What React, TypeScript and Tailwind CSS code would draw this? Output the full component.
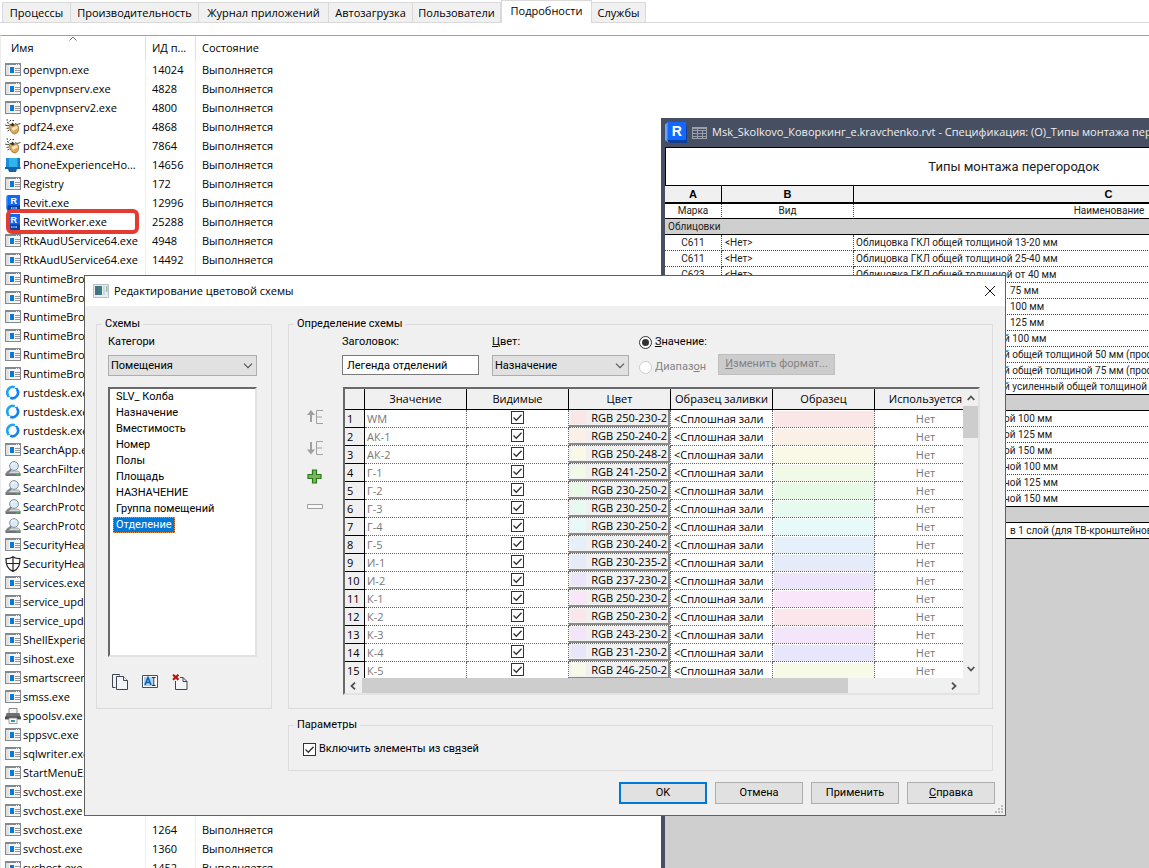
import { ReactNode } from "react";

type IconKind = "app" | "pdf" | "phone" | "revit" | "rustdesk" | "search" | "shield" | "printer";

type Process = { name: string; pid: string; icon?: IconKind; marked?: boolean };

const processes: Process[] = [
  { name: "openvpn.exe", pid: "14024" },
  { name: "openvpnserv.exe", pid: "4828" },
  { name: "openvpnserv2.exe", pid: "4800" },
  { name: "pdf24.exe", pid: "4868", icon: "pdf" },
  { name: "pdf24.exe", pid: "7864", icon: "pdf" },
  { name: "PhoneExperienceHo...", pid: "14656", icon: "phone" },
  { name: "Registry", pid: "172" },
  { name: "Revit.exe", pid: "12996", icon: "revit" },
  { name: "RevitWorker.exe", pid: "25288", icon: "revit", marked: true },
  { name: "RtkAudUService64.exe", pid: "4948" },
  { name: "RtkAudUService64.exe", pid: "14492" },
  { name: "RuntimeBroker.exe", pid: "12084" },
  { name: "RuntimeBroker.exe", pid: "" },
  { name: "RuntimeBroker.exe", pid: "" },
  { name: "RuntimeBroker.exe", pid: "" },
  { name: "RuntimeBroker.exe", pid: "" },
  { name: "RuntimeBroker.exe", pid: "" },
  { name: "rustdesk.exe", pid: "", icon: "rustdesk" },
  { name: "rustdesk.exe", pid: "", icon: "rustdesk" },
  { name: "rustdesk.exe", pid: "", icon: "rustdesk" },
  { name: "SearchApp.exe", pid: "" },
  { name: "SearchFilterHost.exe", pid: "", icon: "search" },
  { name: "SearchIndexer.exe", pid: "", icon: "search" },
  { name: "SearchProtocolHo...", pid: "", icon: "search" },
  { name: "SearchProtocolHo...", pid: "", icon: "search" },
  { name: "SecurityHealthSer...", pid: "" },
  { name: "SecurityHealthSyst...", pid: "", icon: "shield" },
  { name: "services.exe", pid: "" },
  { name: "service_update.exe", pid: "" },
  { name: "service_update.exe", pid: "" },
  { name: "ShellExperienceHo...", pid: "" },
  { name: "sihost.exe", pid: "" },
  { name: "smartscreen.exe", pid: "" },
  { name: "smss.exe", pid: "" },
  { name: "spoolsv.exe", pid: "", icon: "printer" },
  { name: "sppsvc.exe", pid: "" },
  { name: "sqlwriter.exe", pid: "" },
  { name: "StartMenuExperien...", pid: "" },
  { name: "svchost.exe", pid: "" },
  { name: "svchost.exe", pid: "" },
  { name: "svchost.exe", pid: "1264" },
  { name: "svchost.exe", pid: "1360" },
  { name: "svchost.exe", pid: "1452" },
];

const tabs = [
  { title: "Процессы", width: "w-[69px]" },
  { title: "Производительность", width: "w-[128px]" },
  { title: "Журнал приложений", width: "w-[130px]" },
  { title: "Автозагрузка", width: "w-[84px]" },
  { title: "Пользователи", width: "w-[88px]" },
  { title: "Подробности", width: "w-[91px]", active: true },
  { title: "Службы", width: "w-[54px]" },
];

type ScheduleRow = { mark: string; name?: string; rest?: string; group?: boolean; wide?: boolean };

const partition = "Перегородка общей толщино";

const scheduleRows: ScheduleRow[] = [
  { mark: "Облицовки", group: true },
  { mark: "С611", name: "Облицовка ГКЛ общей толщиной 13-20 мм" },
  { mark: "С611", name: "Облицовка ГКЛ общей толщиной 25-40 мм" },
  { mark: "С623", name: "Облицовка ГКЛ общей толщиной от 40 мм" },
  { mark: "С625", name: "Облицовка ГКЛ толщиной", rest: "75 мм", wide: true },
  { mark: "С625", name: "Облицовка ГКЛ толщиной", rest: "100 мм", wide: true },
  { mark: "С626", name: "Облицовка ГКЛ толщиной", rest: "125 мм", wide: true },
  { mark: "С626", name: partition, rest: "й 100 мм" },
  { mark: "С111", name: partition, rest: "й общей толщиной 50 мм (профиль)" },
  { mark: "С111", name: partition, rest: "й общей толщиной 75 мм (профиль)" },
  { mark: "С111", name: partition, rest: "й усиленный общей толщиной 100 мм" },
  { mark: "Перегородки", group: true },
  { mark: "С111", name: partition, rest: "ой 100 мм" },
  { mark: "С111", name: partition, rest: "ой 125 мм" },
  { mark: "С111", name: partition, rest: "ой 150 мм" },
  { mark: "С112", name: partition, rest: "ной 100 мм" },
  { mark: "С112", name: partition, rest: "ной 125 мм" },
  { mark: "С112", name: partition, rest: "ной 150 мм" },
  { mark: "Усиление", group: true },
  { mark: "У1", name: "Усиление фанерой", rest: "в 1 слой (для ТВ-кронштейнов)", wide: true },
];

const schemes = [
  "SLV_ Колба",
  "Назначение",
  "Вместимость",
  "Номер",
  "Полы",
  "Площадь",
  "НАЗНАЧЕНИЕ",
  "Группа помещений",
  "Отделение",
];

const entries = [
  { value: "WM", rgb: "RGB 250-230-2", color: "bg-[#fae6e6]" },
  { value: "АК-1", rgb: "RGB 250-240-2", color: "bg-[#faf0e6]" },
  { value: "АК-2", rgb: "RGB 250-248-2", color: "bg-[#faf8e6]" },
  { value: "Г-1", rgb: "RGB 241-250-2", color: "bg-[#f1fae6]" },
  { value: "Г-2", rgb: "RGB 230-250-2", color: "bg-[#e6fae6]" },
  { value: "Г-3", rgb: "RGB 230-250-2", color: "bg-[#e6faf0]" },
  { value: "Г-4", rgb: "RGB 230-250-2", color: "bg-[#e6fafa]" },
  { value: "Г-5", rgb: "RGB 230-240-2", color: "bg-[#e6f0fa]" },
  { value: "И-1", rgb: "RGB 230-235-2", color: "bg-[#e6ebfa]" },
  { value: "И-2", rgb: "RGB 237-230-2", color: "bg-[#ede6fa]" },
  { value: "К-1", rgb: "RGB 250-230-2", color: "bg-[#fae6fa]" },
  { value: "К-2", rgb: "RGB 250-230-2", color: "bg-[#fae6eb]" },
  { value: "К-3", rgb: "RGB 243-230-2", color: "bg-[#f3e6fa]" },
  { value: "К-4", rgb: "RGB 231-230-2", color: "bg-[#e7e6fa]" },
  { value: "К-5", rgb: "RGB 246-250-2", color: "bg-[#f6fae6]" },
];

const ProcessIcon = ({ kind = "app" }: { kind?: IconKind }) => {
  switch (kind) {
    case "pdf":
      return (
        <svg viewBox="0 0 16 16" className="size-4 shrink-0">
          <path d="M1.500 1h1.500M4.500 2.500L6 1M7.500 1.500h1.500M2 3.500l2 .8" stroke="#333" fill="none" />
          <path d="M0 6l3 .8 3-1.600M10 4.500l2 1 3.500-1M1.500 9.500l2.500-.5M2.500 12l2-1" stroke="#5a4c3c" fill="none" />
          <path d="M4.500 7c2-1.500 7-2 9 .5.800 3.500-.8 7-3.500 7.500C7 15 4.500 11.500 4.500 7z" fill="#d9a95c" stroke="#8b6227" strokeWidth=".7" />
          <path d="M6.500 9l5-2 1.500 2-5 3z" fill="#fbe6b6" />
          <path d="M5.500 6l2-2.500L9.500 6 8 7.500z" fill="#2e2e2e" />
        </svg>
      );
    case "phone":
      return (
        <svg viewBox="0 0 16 16" className="size-4 shrink-0">
          <path d="M1 1h12v10H1z" fill="#2fb4ee" />
          <path d="M1 1h3v9H1z" fill="#1c8fd8" />
          <path d="M12.500 1H15v11h-2.500z" fill="#1577c4" />
          <path d="M0 10h15.500v2H0z" fill="#0f62ad" />
          <path d="M3 12h9l-1 3H4z" fill="#1b5fa5" />
        </svg>
      );
    case "revit":
      return (
        <svg viewBox="0 0 16 16" className="size-4 shrink-0">
          <path d="M1 1.500L3 0v15l-2-1z" fill="#5b9cf3" />
          <path d="M2.500 0H15v16H2.500z" fill="#1268f3" />
          <path d="M2.500 10.500H15V16H2.500z" fill="#0a3fa4" />
          <text x="8.700" y="8.800" textAnchor="middle" fontSize="9" fontWeight="700" fill="#fff" fontFamily="Liberation Sans, sans-serif">R</text>
          <path d="M6 13h1.500M8.300 13h1.200M10.300 13H12" stroke="#b8cff8" strokeWidth="1.500" />
        </svg>
      );
    case "rustdesk":
      return (
        <svg viewBox="0 0 16 16" className="size-4 shrink-0" fill="none" strokeWidth="2.600">
          <path d="M9.800 2.200A5.600 5.600 0 0 0 3.400 10.800" stroke="#1fa3f5" />
          <path d="M5.200 12.800A5.600 5.600 0 0 0 11.800 4.200" stroke="#1483f0" />
          <path d="M1.500 9l1 3.500 3-1z" fill="#1fa3f5" />
          <path d="M13.500 6l-1-3.500-3 1z" fill="#1483f0" />
        </svg>
      );
    case "search":
      return (
        <svg viewBox="0 0 16 16" className="size-4 shrink-0">
          <path d="M2.500 10h11l2 3H.5z" fill="#d7d9db" stroke="#8a8d90" strokeWidth=".7" />
          <path d="M.5 12.500h15V15H.5z" fill="#6f7377" />
          <path d="M11.500 13.200h2v1.300h-2z" fill="#37d13f" />
          <path d="M6.500 8L2 12.500" stroke="#7d8288" strokeWidth="2" />
          <circle cx="9" cy="5" r="4.400" fill="#d9eaf8" stroke="#8d9297" />
          <path d="M6.500 4.500a2.600 2.600 0 0 1 3-2" stroke="#fff" fill="none" />
        </svg>
      );
    case "shield":
      return (
        <svg viewBox="0 0 16 16" className="size-4 shrink-0" fill="none" stroke="#222" strokeWidth="1.200">
          <path d="M8 .7C6 2.400 3.500 2.700 1 2.700c0 6 1 10 7 12.700 6-2.700 7-6.700 7-12.700C12.500 2.700 10 2.400 8 .7zM8 1v14M1.200 7.500h13.600" />
        </svg>
      );
    case "printer":
      return (
        <svg viewBox="0 0 16 16" className="size-4 shrink-0">
          <path d="M4 .5h8V6H4z" fill="#f2f2f2" stroke="#8c8c8c" />
          <path d="M1.500 5h13l1.500 6.500H0z" fill="#6d6f72" />
          <path d="M0 8.500h16V11H0z" fill="#4c4e50" />
          <path d="M4 10h8v5.500H4z" fill="#fafafa" stroke="#8c8c8c" strokeWidth=".8" />
          <path d="M6 12h2v2H6z" fill="#2b8ad6" />
          <path d="M8 12h2v2H8z" fill="#3da45a" />
        </svg>
      );
    default:
      return (
        <svg viewBox="0 0 16 16" className="size-4 shrink-0" shapeRendering="crispEdges">
          <path d="M0 1h16v13H0z" fill="#84898e" />
          <path d="M1 3h14v10H1z" fill="#f6f6f6" />
          <path d="M1 3h3v10H1z" fill="#e2e2e2" />
          <path d="M5 5h4v6H5z" fill="#0b78d7" />
          <path d="M10 6h5M10 8h5M10 10h5" stroke="#9a9a9a" transform="translate(0 .5)" />
          <path d="M11 2h1v1h-1zM13 2h1v1h-1z" fill="#e8eaec" />
        </svg>
      );
  }
};

const TaskManager = () => (
  <div className="min-w-[660px] font-['Open_Sans',sans-serif] text-[11px] leading-4 text-black">
    <div role="tablist" className="flex h-[23px] items-end border-b border-[#d9d9d9] pl-[2px]">
      {tabs.map((tab) => (
        <button
          key={tab.title}
          role="tab"
          aria-selected={!!tab.active}
          className={`${tab.width} shrink-0 whitespace-nowrap border-[#d9d9d9] text-center ${
            tab.active ? "-mb-px h-[23px] border-x border-t bg-white pb-[2px]" : "h-[20px] border-t border-r bg-[#f0f0f0] first:border-l"
          }`}
        >
          {tab.title}
        </button>
      ))}
    </div>
    <div className="mt-3 border-t border-l border-t-[#a0a0a0] border-l-[#ececec]">
      <table className="w-full table-fixed border-separate border-spacing-0 text-left">
        <colgroup>
          <col className="w-[145px]" />
          <col className="w-[50px]" />
          <col />
        </colgroup>
        <thead>
          <tr className="h-[24px]">
            <th className="relative border-r border-[#e0e0e0] pl-[10px] font-normal">
              Имя
              <svg viewBox="0 0 8 5" className="absolute top-0 left-[68px] h-[5px] w-2" fill="none" stroke="#777">
                <path d="M.5 4.500L4 1l3.500 3.500" />
              </svg>
            </th>
            <th className="border-r border-[#e0e0e0] pl-[6px] font-normal">ИД п...</th>
            <th className="pl-[6px] font-normal">Состояние</th>
          </tr>
        </thead>
        <tbody>
          {processes.map((process, i) => (
            <tr key={i} className="h-[19px]">
              <td className="relative border-r border-[#e9eff8] p-0 pl-1">
                <div className="flex items-center gap-[2px] overflow-hidden whitespace-nowrap">
                  <ProcessIcon kind={process.icon} />
                  {process.name}
                </div>
                {process.marked && (
                  <span className="absolute -top-[3px] left-[5px] h-[25px] w-[133px] rounded-[6px] border-4 border-[#e53a30]" />
                )}
              </td>
              <td className="border-r border-[#e9eff8] p-0 pl-[6px]">{process.pid}</td>
              <td className="p-0 pl-[6px]">Выполняется</td>
            </tr>
          ))}
        </tbody>
      </table>
    </div>
  </div>
);

const ScheduleWindow = () => (
  <div className="absolute top-[118px] right-0 bottom-0 left-[661px] overflow-hidden bg-[#474f62] pl-1">
    <div className="flex h-[29px] items-center font-['Open_Sans',sans-serif] text-[11px] text-[#f0f0f0]">
      <svg viewBox="0 0 22 22" className="size-[22px] shrink-0">
        <path d="M0 2.500L3 0v20l-3-2z" fill="#6ba4f5" />
        <path d="M2 18l3 3h17V5l-2-4z" fill="#0d3e9c" />
        <path d="M2.500 0H21v18H2.500z" fill="#1268ff" />
        <text x="11.800" y="14" textAnchor="middle" fontSize="14" fontWeight="700" fill="#fff" fontFamily="Liberation Sans, sans-serif">R</text>
      </svg>
      <svg viewBox="0 0 15 12" className="ml-[5px] h-3 w-[15px] shrink-0" fill="none" stroke="#9aa0ab" shapeRendering="crispEdges">
        <path d="M.5 .5h14v11H.5zM0 3.500h15M0 6.500h15M0 9h15M5.500 0v12M10.500 3v9" />
        <path d="M0 1.500h15" />
      </svg>
      <span className="ml-[5px] whitespace-nowrap">
        Msk_Skolkovo_Коворкинг_e.kravchenko.rvt - Спецификация: (О)_Типы монтажа перегородок
      </span>
    </div>
    <div className="h-full w-[890px] bg-[#cfcfcf] font-['Roboto',sans-serif] text-[10px] text-[#222]">
      <div className="flex h-[39px] items-center justify-center border border-black bg-white pr-[192px] text-[13px]">
        Типы монтажа перегородок
      </div>
      <table className="w-full table-fixed border-separate border-spacing-0">
        <colgroup>
          <col className="w-[57px]" />
          <col className="w-[132px]" />
          <col className="w-[510px]" />
          <col />
        </colgroup>
        <thead>
          <tr className="h-[18px] bg-[#f0f0f0] font-['Liberation_Sans',sans-serif] text-[11px] leading-[14px] text-black">
            <th className="border-r border-b-2 border-black p-0">A</th>
            <th className="border-r border-b-2 border-black p-0">B</th>
            <th className="border-r border-b-2 border-black p-0">C</th>
            <th className="border-b-2 border-black p-0">D</th>
          </tr>
          <tr className="h-[15px] bg-white leading-[14px]">
            <th className="border-r border-b border-r-[#444] border-b-black p-0 font-normal [border-right-style:dotted]">Марка</th>
            <th className="border-r border-b border-r-[#444] border-b-black p-0 font-normal [border-right-style:dotted]">Вид</th>
            <th className="border-b border-black p-0 font-normal">Наименование</th>
            <th className="border-b border-black p-0 font-normal">Толщина</th>
          </tr>
        </thead>
        <tbody>
          {scheduleRows.map((row, i) => {
            const last = i === scheduleRows.length - 1 || scheduleRows[i + 1].group;
            const line = last ? "border-b border-b-black" : "border-b border-b-[#444] [border-bottom-style:dotted]";
            return row.group ? (
              <tr key={i} className="h-4 leading-[14px]">
                <td colSpan={4} className="border-b border-black bg-[#cfcfcf] p-0 pl-[3px]">{row.mark}</td>
              </tr>
            ) : (
              <tr key={i} className="h-4 bg-white leading-[14px]">
                <td className={`border-r border-r-[#444] p-0 text-center [border-right-style:dotted] ${line}`}>{row.mark}</td>
                <td className={`border-r border-r-[#444] p-0 pl-[3px] [border-right-style:dotted] ${line}`}>&lt;Нет&gt;</td>
                <td className={`p-0 pl-[2px] ${line}`}>
                  <div className="flex whitespace-nowrap">
                    <span className={`shrink-0 ${row.wide ? "min-w-[154px]" : "min-w-[148px]"}`}>{row.name}</span>
                    {row.rest && <span>{row.rest}</span>}
                  </div>
                </td>
                <td className={`p-0 ${line}`} />
              </tr>
            );
          })}
        </tbody>
      </table>
    </div>
  </div>
);

const Check = ({ id, label }: { id?: string; label?: string }) => (
  <span className="relative inline-block size-[13px] shrink-0 align-top">
    <input id={id} aria-label={label} type="checkbox" defaultChecked className="block size-[13px] appearance-none border border-[#333] bg-white" />
    <svg viewBox="0 0 13 13" className="pointer-events-none absolute inset-0" fill="none" stroke="#333" strokeWidth="1.300">
      <path d="M2.500 6.500l2.800 2.800 5.200-5.600" />
    </svg>
  </span>
);

const Dropdown = ({ id, value, className }: { id: string; value: string; className: string }) => (
  <div className={`relative ${className}`}>
    <select id={id} className="h-[21px] w-full appearance-none border border-[#adadad] bg-[#e1e1e1] pl-[2px] leading-4">
      <option>{value}</option>
    </select>
    <svg viewBox="0 0 10 6" className="pointer-events-none absolute top-[8px] right-1 h-[6px] w-[10px]" fill="none" stroke="#555" strokeWidth="1.100">
      <path d="M1 .7l4 4 4-4" />
    </svg>
  </div>
);

type GroupProps = { title: string; className?: string; bodyClassName: string; children: ReactNode };

const Group = ({ title, className = "", bodyClassName, children }: GroupProps) => (
  <fieldset className={`min-w-0 border border-[#dcdcdc] ${className}`}>
    <legend className="ml-[5px] px-[3px] leading-[14px]">{title}</legend>
    <div className={bodyClassName}>{children}</div>
  </fieldset>
);

const SchemeList = () => (
  <Group title="Схемы" className="w-[176px] shrink-0 self-start" bodyClassName="pt-[3px] pr-[14px] pb-[18px] pl-[11px]">
    <label htmlFor="category" className="block leading-4">Категори</label>
    <Dropdown id="category" value="Помещения" className="mt-[5px]" />
    <ul
      role="listbox"
      aria-label="Схемы"
      className="mt-[11px] h-[270px] border-2 border-t-[#696969] border-r-[#e3e3e3] border-b-[#e3e3e3] border-l-[#696969] bg-white pl-[3px]"
    >
      {schemes.map((scheme, i) => (
        <li key={scheme} role="option" aria-selected={i === schemes.length - 1} className="flex h-4 items-center whitespace-nowrap leading-4">
          <span
            className={
              i === schemes.length - 1
                ? "border border-dotted border-[#e8924a] bg-[#0078d7] px-[2px] leading-[14px] text-white"
                : "px-[3px]"
            }
          >
            {scheme}
          </span>
        </li>
      ))}
    </ul>
    <div className="mt-[17px] flex gap-[14px] pl-1">
      <button aria-label="Копировать">
        <svg viewBox="0 0 16 16" className="size-4" fill="#f4f5f8" stroke="#3f4452">
          <path d="M.5 .5h7v1M.5 .5v13h3" fill="none" />
          <path d="M4.500 2.500h7l4 4v9h-11z" />
          <path d="M11.500 2.500v4h4" />
        </svg>
      </button>
      <button aria-label="Переименовать">
        <svg viewBox="0 0 16 16" className="size-4">
          <path d="M.5 1.500h15v12H.5z" fill="#fff" stroke="#4a4f5c" />
          <path d="M2 3h9v9H2z" fill="#a9d4f2" />
          <path d="M3 11l3-7.500L9 11M4.200 8.500h3.600" fill="none" stroke="#155fa8" strokeWidth="1.600" />
          <path d="M10 3.500h3.500M10 11.500h3.500M11.800 3.500v8" stroke="#333" />
        </svg>
      </button>
      <button aria-label="Удалить">
        <svg viewBox="0 0 16 16" className="size-4">
          <path d="M3.500 3.500h7.500l4 4v8H3.500z" fill="#f4f5f8" stroke="#3f4452" />
          <path d="M11 3.500v4h4" fill="none" stroke="#3f4452" />
          <path d="M0 0h8v7H0z" fill="#f0f0f0" />
          <path d="M1 .8l5.500 5M6.500 .8L1 5.800" stroke="#c00d0d" strokeWidth="2.200" />
        </svg>
      </button>
    </div>
  </Group>
);

const RowTools = () => (
  <div className="w-4 shrink-0 pt-[22px]">
    <button aria-label="Вверх" className="block">
      <svg viewBox="0 0 16 16" className="size-4" fill="none" stroke="#a0a0a0">
        <path d="M4 13V4" strokeWidth="2" />
        <path d="M0 6l4-5 4 5z" fill="#a0a0a0" stroke="none" />
        <path d="M16 1.500H9.500v13H16M9.500 8H15" />
      </svg>
    </button>
    <button aria-label="Вниз" className="mt-[15px] block">
      <svg viewBox="0 0 16 16" className="size-4" fill="none" stroke="#a0a0a0">
        <path d="M4 2v9" strokeWidth="2" />
        <path d="M0 9.500l4 5 4-5z" fill="#a0a0a0" stroke="none" />
        <path d="M16 1.500H9.500v13H16M9.500 8H15" />
      </svg>
    </button>
    <button aria-label="Добавить" className="mt-[13px] block">
      <svg viewBox="0 0 16 16" className="size-4">
        <path d="M5.500 1h4v4.500H14v4H9.500V14h-4V9.500H1v-4h4.500z" fill="#7fb45c" stroke="#277a1a" strokeWidth="1.200" />
      </svg>
    </button>
    <button aria-label="Убрать" className="mt-[13px] block">
      <svg viewBox="0 0 16 16" className="size-4" fill="#f8f8f8" stroke="#a0a0a0">
        <path d="M.5 6.500h15v4H.5z" />
      </svg>
    </button>
  </div>
);

const headers = ["Значение", "Видимые", "Цвет", "Образец заливки", "Образец", "Используется"];

const Chevron = ({ className }: { className: string }) => (
  <svg viewBox="0 0 8 6" className={`h-[6px] w-2 ${className}`} fill="none" stroke="#505050" strokeWidth="1.800">
    <path d="M.7 5L4 1.500 7.300 5" />
  </svg>
);

const SchemeGrid = () => (
  <div className="min-w-0 flex-1 border-2 border-t-[#696969] border-r-[#e3e3e3] border-b-[#e3e3e3] border-l-[#696969] font-['Open_Sans',sans-serif]">
    <div className="flex h-[289px]">
      <div className="min-w-0 flex-1 overflow-hidden bg-white">
        <table className="w-[632px] table-fixed border-separate border-spacing-0 leading-4 whitespace-nowrap">
          <thead>
            <tr className="h-[21px] bg-[#f0f0f0]">
              <th className="w-5 border-r border-b border-black p-0" />
              {headers.map((header) => (
                <th key={header} className="border-r border-b border-black p-0 font-normal">{header}</th>
              ))}
            </tr>
          </thead>
          <tbody>
            {entries.map((entry, i) => (
              <tr key={entry.value} className="h-[18px]">
                <td className="border-r border-b border-black bg-[#f0f0f0] p-0 pl-[2px]">{i + 1}</td>
                <td className="border-r border-b border-dotted border-[#666] p-0 pl-[2px] text-[#777]">{entry.value}</td>
                <td className="border-r border-b border-dotted border-[#666] p-0 text-center">
                  <Check label={entry.value} />
                </td>
                <td className="border-r border-b border-dotted border-[#666] p-0">
                  <button className="flex h-[17px] w-full items-center justify-between overflow-hidden border-r-2 border-b-2 border-[#8a8a8a] bg-[#f0f0f0] pr-px pl-[2px]">
                    <span className={`h-[13px] w-[15px] shrink-0 ${entry.color}`} />
                    <span className="leading-[15px]">{entry.rgb}</span>
                  </button>
                </td>
                <td className="overflow-hidden border-r border-b border-dotted border-[#666] p-0 pl-[3px]">&lt;Сплошная зали</td>
                <td className="border-r border-b border-dotted border-[#666] p-0">
                  <div className={`ml-px mt-px h-4 ${entry.color}`} />
                </td>
                <td className="border-r border-b border-dotted border-[#666] p-0 text-center text-[#777]">Нет</td>
              </tr>
            ))}
          </tbody>
        </table>
      </div>
      <div className="flex w-[15px] shrink-0 flex-col items-center bg-[#f0f0f0] pt-[6px] pb-[6px]">
        <Chevron className="shrink-0" />
        <div className="mt-[5px] h-8 w-full bg-[#cdcdcd]" />
        <Chevron className="mt-auto shrink-0 rotate-180" />
      </div>
    </div>
    <div className="flex h-[15px] items-center bg-[#f0f0f0] pr-[20px] pl-1">
      <Chevron className="-rotate-90" />
      <div className="ml-[5px] h-[15px] w-[486px] bg-[#cdcdcd]" />
      <Chevron className="ml-auto rotate-90" />
    </div>
  </div>
);

const SchemeDefinition = () => (
  <Group title="Определение схемы" bodyClassName="pr-[12px] pb-[13px] pl-[18px]">
    <div className="flex h-[44px] items-start pt-[3px] pl-[35px]">
      <div className="w-[137px]">
        <label htmlFor="title" className="block leading-4">Заголовок:</label>
        <input id="title" defaultValue="Легенда отделений" className="mt-[5px] block h-[20px] w-full border border-[#7a7a7a] bg-white px-1" />
      </div>
      <div className="ml-[13px] w-[137px]">
        <label htmlFor="color" className="block leading-4"><u>Ц</u>вет:</label>
        <Dropdown id="color" value="Назначение" className="mt-[5px]" />
      </div>
      <div className="ml-[10px] flex w-[79px] flex-col gap-[9px]">
        <label className="flex items-center gap-[3px] leading-4">
          <input
            type="radio"
            name="mode"
            defaultChecked
            className="flex size-[13px] shrink-0 appearance-none items-center justify-center rounded-full border border-[#333] bg-white before:size-[7px] before:rounded-full before:bg-[#333]"
          />
          <span><u>З</u>начение:</span>
        </label>
        <label className="flex items-center gap-[3px] leading-4 text-[#838383]">
          <input type="radio" name="mode" disabled className="size-[13px] shrink-0 appearance-none rounded-full border border-[#ccc] bg-white" />
          <span>Диапаз<u>о</u>н</span>
        </label>
      </div>
      <button disabled className="mt-5 h-[21px] w-[117px] border border-[#bfbfbf] bg-[#ccc] text-[#838383]">
        <u>И</u>зменить формат...
      </button>
    </div>
    <div className="mt-3 flex gap-5">
      <RowTools />
      <SchemeGrid />
    </div>
  </Group>
);

const ColorSchemeDialog = () => (
  <div
    role="dialog"
    aria-label="Редактирование цветовой схемы"
    className="absolute top-[275px] left-[84px] w-[922px] border border-[#606060] bg-[#f0f0f0] font-['Roboto',sans-serif] text-[11px] text-black"
  >
    <div className="flex h-[30px] items-center bg-white px-2 font-['Open_Sans',sans-serif]">
      <svg viewBox="0 0 16 14" className="h-[14px] w-4">
        <path d="M.5 .5h15v13H.5z" fill="#e9ecef" stroke="#b9bec4" />
        <path d="M2 2h7v9H2z" fill="#3d7f77" />
        <path d="M2 2h3v9H2z" fill="#4a6a94" />
        <path d="M10 2h2v9h-2z" fill="#c3dbe8" />
        <path d="M13 2h1.500v6H13z" fill="#9bbf9d" />
      </svg>
      <h1 className="ml-[5px]">Редактирование цветовой схемы</h1>
      <button aria-label="Закрыть" className="mr-[1px] ml-auto">
        <svg viewBox="0 0 12 12" className="size-3" stroke="#111">
          <path d="M1 1l10 10M11 1L1 11" />
        </svg>
      </button>
    </div>
    <div className="flex gap-4 pt-[11px] pr-[12px] pl-[11px]">
      <SchemeList />
      <div className="flex min-w-0 flex-1 flex-col gap-[9px]">
        <SchemeDefinition />
        <Group title="Параметры" className="h-[53px]" bodyClassName="pt-[9px] pl-[14px]">
          <label className="flex items-center gap-[3px] leading-4">
            <Check />
            <span>Включить элементы из св<u>я</u>зей</span>
          </label>
        </Group>
      </div>
    </div>
    <div className="mt-[11px] mb-[11px] flex justify-end gap-2 pr-[10px]">
      <button className="h-[22px] w-[88px] border-2 border-[#0078d7] bg-[#e1e1e1]">OK</button>
      <button className="h-[22px] w-[88px] border border-[#adadad] bg-[#e1e1e1]">Отмена</button>
      <button className="h-[22px] w-[88px] border border-[#adadad] bg-[#e1e1e1]">Применить</button>
      <button className="h-[22px] w-[88px] border border-[#adadad] bg-[#e1e1e1]"><u>С</u>правка</button>
    </div>
    <svg viewBox="0 0 8 8" className="absolute right-[2px] bottom-[2px] size-2" fill="#bdbdbd">
      <path d="M0 6h2v2H0zM3 6h2v2H3zM6 6h2v2H6zM3 3h2v2H3zM6 3h2v2H6zM6 0h2v2H6z" />
    </svg>
  </div>
);

const App = () => (
  <main className="relative h-screen overflow-hidden bg-white">
    <TaskManager />
    <ScheduleWindow />
    <ColorSchemeDialog />
  </main>
);

export default App;
